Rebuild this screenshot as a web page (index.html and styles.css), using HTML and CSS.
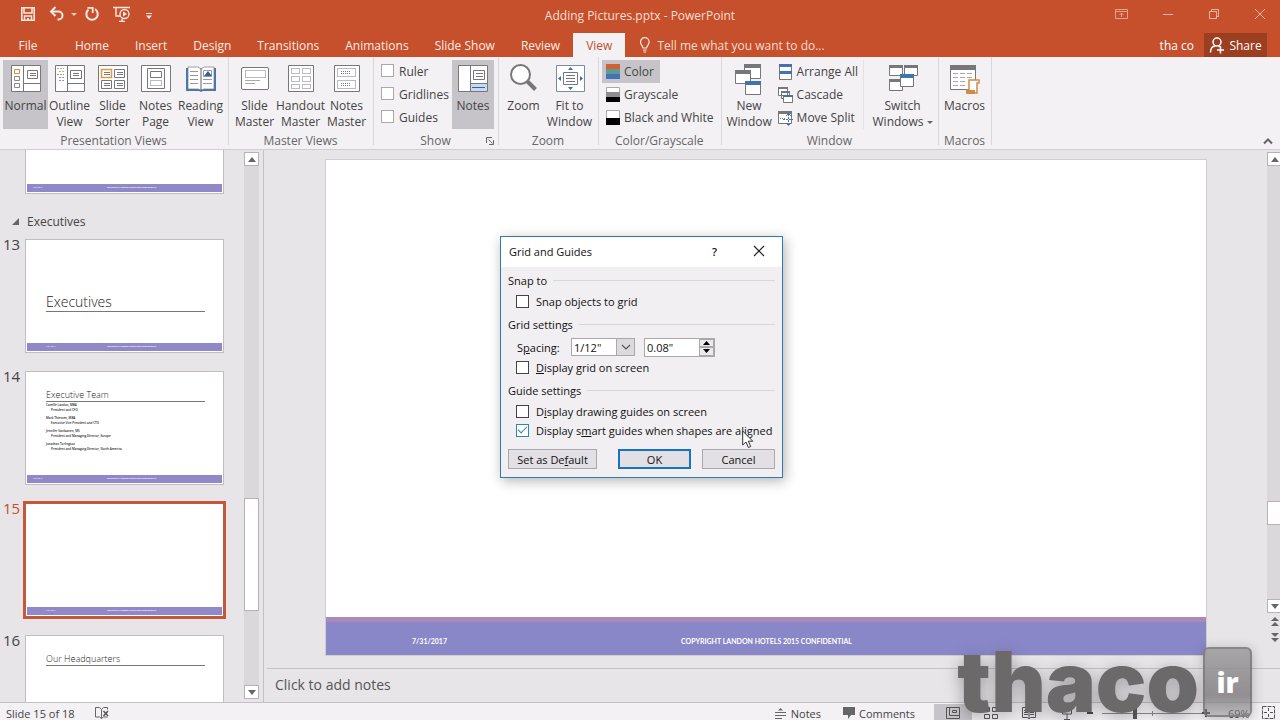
FILE: index.html
```html
<!DOCTYPE html>
<html lang="en">
<head>
<meta charset="utf-8">
<title>Adding Pictures.pptx - PowerPoint</title>
<link rel="stylesheet" href="styles.css">
</head>
<body>
<div class="app">
  <header class="titlebar">
    <div class="quick">
      <button class="bare" aria-label="Save"><svg width="16" height="16"><path d="M1.800 1.800h12.400v12.400H1.800z" fill="none" stroke="#fbe9e2" stroke-width="1.600"/><path d="M4 2v5h8V2M4.500 14v-4h7v4" fill="none" stroke="#fbe9e2" stroke-width="1.500"/><path d="M7 12h2v2H7z" fill="#fbe9e2"/></svg></button>
      <button class="bare" aria-label="Undo"><svg width="16" height="16"><path d="M2 5.500h7.500a4 4 0 0 1 0 8H8.500" fill="none" stroke="#fbe9e2" stroke-width="2"/><path d="M6.500 1L2 5.500 6.500 10" fill="none" stroke="#fbe9e2" stroke-width="2"/></svg></button>
      <button class="bare narrow" aria-label="Undo list"><svg width="6" height="16"><path d="M0 7h6L3 10z" fill="#f3cbbb"/></svg></button>
      <button class="bare repeat" aria-label="Repeat"><svg width="16" height="16"><path d="M11 3.200A5.700 5.700 0 1 1 4.500 3.600" fill="none" stroke="#fbe9e2" stroke-width="2"/><path d="M3.500 1.800h5.200v5.200" fill="none" stroke="#fbe9e2" stroke-width="1.800"/></svg></button>
      <button class="bare" aria-label="Start from beginning"><svg width="18" height="16"><path d="M0 1.500h17M3 2v8h4M6 15.500h6M9 13v2" fill="none" stroke="#fbe9e2" stroke-width="1.400"/><circle cx="11.500" cy="8" r="4.500" fill="#c5502b" stroke="#fbe9e2" stroke-width="1.300"/><path d="M10 5.500v5L14 8z" fill="#fbe9e2"/></svg></button>
      <button class="bare narrow" aria-label="Customize"><svg width="6" height="16"><path d="M0 7h6v1H0zM0 9.500h6L3 13z" fill="#fbe9e2"/></svg></button>
    </div>
    <div class="title">Adding Pictures.pptx - PowerPoint</div>
    <div class="winbtns">
      <button class="bare" aria-label="Ribbon display"><svg width="14" height="14"><path d="M.5 2.500h12v9H.500zM.500 4.500h12M6.500 10V6M4.500 8l2-2 2 2" fill="none" stroke="#e3a28a"/></svg></button>
      <button class="bare" aria-label="Minimize"><svg width="14" height="14"><path d="M2 7.500h10" stroke="#e9b5a2"/></svg></button>
      <button class="bare" aria-label="Restore"><svg width="14" height="14"><path d="M2.500 4.500h7v7h-7zM4.500 4.500v-2h7v7h-2" fill="none" stroke="#e9b5a2"/></svg></button>
      <button class="bare" aria-label="Close"><svg width="14" height="14"><path d="M2 2l10 10M12 2L2 12" stroke="#e9b5a2"/></svg></button>
    </div>
  </header>

  <nav class="tabs">
    <button class="tab file">File</button>
    <button class="tab">Home</button>
    <button class="tab">Insert</button>
    <button class="tab">Design</button>
    <button class="tab">Transitions</button>
    <button class="tab">Animations</button>
    <button class="tab">Slide Show</button>
    <button class="tab">Review</button>
    <button class="tab active">View</button>
    <button class="tell"><svg width="12" height="16"><path d="M4 11c0-2-2.500-3-2.500-6a4.300 4.300 0 0 1 8.600 0c0 3-2.500 4-2.500 6zM4 13h3.600M4.500 15h2.600" fill="none" stroke="#fbe9e2" stroke-width="1.200"/></svg>Tell me what you want to do...</button>
    <span class="user">tha co</span>
    <button class="share"><svg width="16" height="18"><circle cx="8" cy="6" r="4" fill="none" stroke="#fff" stroke-width="1.500"/><path d="M1.500 16.500c0-4 2-6.300 5-6.500M9.500 10l2 1M11.500 10.500v7M8 14h7" fill="none" stroke="#fff" stroke-width="1.500"/></svg>Share</button>
  </nav>

  <section class="ribbon">
    <div class="group">
      <div class="tools">
        <button class="big w45 on"><svg width="32" height="32"><path d="M1.500 2.500h29v26h-29zM13.500 2.500v26M13.500 20.500h17" fill="#fff" stroke="#77767a"/><path d="M17.500 7.500h10v8h-10zM20 10.500h6M20 12.500h6" fill="none" stroke="#77767a"/><path d="M4.500 6.500h5v4h-5z" fill="none" stroke="#d58a3c"/><path d="M4.500 13.500h5v4h-5zM4.500 20.500h5v4h-5z" fill="none" stroke="#88868a"/></svg>Normal</button>
        <button class="big w43"><svg width="32" height="32"><path d="M1.500 2.500h29v26h-29zM13.500 2.500v26M13.500 20.500h17" fill="#fff" stroke="#77767a"/><path d="M16.500 7.500h11v8h-11zM19 10.500h6M19 12.500h6" fill="none" stroke="#77767a"/><path d="M3 5.500h7M5 8.500h5" stroke="#d9a865" stroke-dasharray="2 1"/><path d="M3 11.500h7M5 14.500h5M5 17.500h5" stroke="#999" stroke-dasharray="2 1"/></svg>Outline<br>View</button>
        <button class="big w43"><svg width="32" height="32"><path d="M1.500 2.500h29v26h-29z" fill="#fff" stroke="#77767a"/><path d="M4.500 6.500h10v8h-10z" fill="none" stroke="#d99a45" stroke-width="1.500"/><path d="M17.500 6.500h10v8h-10zM4.500 17.500h10v8h-10zM17.500 17.500h10v8h-10zM7 9.500h6M7 11.500h6M20 9.500h6M20 11.500h6M7 20.500h6M7 22.500h6M20 20.500h6M20 22.500h6" fill="none" stroke="#77767a"/></svg>Slide<br>Sorter</button>
        <button class="big w43"><svg width="32" height="32"><path d="M1.500 2.500h29v26h-29zM7.500 5.500h17v20h-17zM10.500 8.500h11v6h-11z" fill="#fff" stroke="#77767a"/><path d="M10.500 17.500h11v5h-11z" fill="none" stroke="#77767a" stroke-dasharray="1 1"/></svg>Notes<br>Page</button>
        <button class="big w47"><svg width="32" height="32"><path d="M1 5h30v23H18l-2 1-2-1H1z" fill="#4577b0"/><path d="M3 4h10l3 2v21l-3-1H3zM29 4H19l-3 2v21l3-1h10z" fill="#fff" stroke="#77767a" stroke-width=".7"/><path d="M5 8.500h8M5 12.500h8M5 16.500h8M5 20.500h8M18 16.500h9M18 20.500h9" stroke="#999"/><path d="M18.500 7.500h8v6h-8z" fill="#fff" stroke="#999"/><path d="M19 13l4-5 4 5z" fill="#2f5f9c"/></svg>Reading<br>View</button>
      </div>
      <div class="caption">Presentation Views</div>
    </div>
    <div class="group">
      <div class="tools">
        <button class="big w45"><svg width="32" height="32"><rect x="2.500" y="4.500" width="27" height="22" rx="1.500" fill="#fff" stroke="#77767a"/><path d="M6.500 7.500h20v7h-20z" fill="none" stroke="#77767a" stroke-dasharray="1 1"/><path d="M6 17.500h15M6 20.500h10" stroke="#aaa"/></svg>Slide<br>Master</button>
        <button class="big w47"><svg width="32" height="32"><path d="M3.500 2.500h25v26h-25z" fill="#fff" stroke="#77767a"/><path d="M6.500 5.500h8v5h-8zM17.500 5.500h8v5h-8zM6.500 13.500h8v5h-8zM17.500 13.500h8v5h-8zM6.500 21.500h8v4h-8zM17.500 21.500h8v4h-8z" fill="none" stroke="#77767a" stroke-dasharray="1 1"/></svg>Handout<br>Master</button>
        <button class="big w45"><svg width="32" height="32"><path d="M3.500 2.500h25v26h-25z" fill="#fff" stroke="#77767a"/><path d="M6.500 5.500h18v8h-18zM6.500 17.500h18v8h-18zM10 8.500h10M10 10.500h10M10 20.500h10M10 22.500h10" fill="none" stroke="#77767a" stroke-dasharray="1 1"/></svg>Notes<br>Master</button>
      </div>
      <div class="caption">Master Views</div>
    </div>
    <div class="group">
      <div class="tools">
        <div class="checks">
          <label class="tick"><input type="checkbox">Ruler</label>
          <label class="tick"><input type="checkbox">Gridlines</label>
          <label class="tick"><input type="checkbox">Guides</label>
        </div>
        <button class="big w42 on"><svg width="32" height="32"><path d="M1.500 2.500h29v26h-29z" fill="#fff" stroke="#77767a"/><path d="M13 21h17v7H13z" fill="#c9daf0"/><path d="M13.500 2.500v26M13.500 20.500h17M16.500 7.500h11v9h-11zM19 10.500h7M19 13.500h7" fill="none" stroke="#77767a"/><path d="M15 24.500h13" stroke="#2f66a8"/></svg>Notes</button>
      </div>
      <div class="caption">Show<button class="bare launcher" aria-label="Grid settings"><svg width="8" height="8"><path d="M.5 6V.500H6M2.500 2.500l4 4M7.500 3v4.500H3" fill="none" stroke="#666"/></svg></button></div>
    </div>
    <div class="group">
      <div class="tools">
        <button class="big w43"><svg width="32" height="32"><circle cx="12.500" cy="11.500" r="9.500" fill="#fff" stroke="#77767a" stroke-width="2"/><path d="M19.500 18.500l8 8" stroke="#77767a" stroke-width="4"/></svg>Zoom</button>
        <button class="big w49"><svg width="32" height="32"><path d="M2.500 2.500h28v26h-28z" fill="#fff" stroke="#7d8ba0"/><path d="M9.500 9.500h14v12h-14zM12 12.500h9M12 15.500h9M12 18.500h9" fill="none" stroke="#77767a"/><path d="M14 7h5l-2.500-3zM14 24h5l-2.500 3zM7 13v5l-3-2.500zM26 13v5l3-2.500z" fill="#3f6ea5"/></svg>Fit to<br>Window</button>
      </div>
      <div class="caption">Zoom</div>
    </div>
    <div class="group">
      <div class="tools stack">
        <button class="small on"><svg width="14" height="15"><path d="M0 0h14v5H0z" fill="#d35f35"/><path d="M0 5h14v5H0z" fill="#5a9c94"/><path d="M0 10h14v5H0z" fill="#4173b5"/></svg>Color</button>
        <button class="small"><svg width="14" height="15"><path d="M.5.500h13v14H.500z" fill="#fff" stroke="#aaa"/><path d="M0 5h14v5H0z" fill="#8f8d90"/><path d="M0 10h14v5H0z" fill="#000"/></svg>Grayscale</button>
        <button class="small"><svg width="14" height="15"><path d="M.5.500h13v14H.500z" fill="#fff" stroke="#aaa"/><path d="M0 8h14v7H0z" fill="#000"/></svg>Black and White</button>
      </div>
      <div class="caption">Color/Grayscale</div>
    </div>
    <div class="group">
      <div class="tools">
        <button class="big w49"><svg width="32" height="32"><g fill="#fff" stroke="#77767a"><path d="M11.500 2.500h16v13h-16z"/><path d="M2.500 8.500h15v12h-15z"/></g><path d="M11 1h17v4H11zM2 7h16v4H2z" fill="#77767a"/><path d="M12.500 19.500h15v12h-15z" fill="#fff" stroke="#77767a"/><path d="M12 18h16v4H12z" fill="#4173ad"/></svg>New<br>Window</button>
        <div class="stack">
          <button class="small"><svg width="15" height="16"><path d="M1.500.500h12v7h-12zM1.500 8.500h12v7h-12z" fill="#fff" stroke="#77767a"/><path d="M1 0h13v3H1zM1 7h13v3H1z" fill="#4173ad"/></svg>Arrange All</button>
          <button class="small"><svg width="15" height="16"><path d="M.5.500h9v8h-9zM3.500 4.500h8v7h-8z" fill="#fff" stroke="#77767a"/><path d="M5.500 8.500h9v7h-9z" fill="#fff" stroke="#77767a"/><path d="M0 0h10v2H0zM3 4h9v2H3z" fill="#77767a"/><path d="M5 8h10v2H5z" fill="#4173ad"/></svg>Cascade</button>
          <button class="small"><svg width="15" height="16"><path d="M.5 1.500h13v12H.500z" fill="#fff" stroke="#77767a"/><path d="M0 1h14v3H0z" fill="#77767a"/><path d="M2 8.500h5" stroke="#77767a" stroke-dasharray="1 1"/><path d="M10.500 4v11M5 9.500h10" stroke="#4173ad" stroke-dasharray="2 1"/><path d="M8 6l2.500-2.500L13 6M8 13l2.500 2.500L13 13" fill="none" stroke="#4173ad"/></svg>Move Split</button>
        </div>
        <button class="big switch"><svg width="32" height="32"><path d="M2.500 2.500h13v10h-13zM17.500 2.500h13v10h-13zM2.500 16.500h13v11h-13z" fill="#fff" stroke="#77767a"/><path d="M2 2h14v3H2zM17 2h14v3H17zM2 16h14v3H2z" fill="#77767a"/><path d="M13.500 12.500h13v11h-13z" fill="#fff" stroke="#77767a"/><path d="M13 11h14v4H13z" fill="#4173ad"/></svg><span>Switch<br>Windows<i class="caret"></i></span></button>
      </div>
      <div class="caption">Window</div>
    </div>
    <div class="group">
      <div class="tools">
        <button class="big w45"><svg width="32" height="32"><path d="M1.500 2.500h25v24h-25z" fill="#fff" stroke="#77767a"/><path d="M1 2h26v5H1z" fill="#77767a"/><path d="M4 10.500h20M4 14.500h20M4 18.500h14M4 22.500h12" stroke="#aaa" stroke-dasharray="5 2"/><path d="M20 17h10v3h-2v10H18v-3h2z" fill="#fff" stroke="#d48a42" stroke-width="1.500"/><path d="M17 27h9v4h-7a2 2 0 0 1-2-2z" fill="#d48a42"/></svg>Macros</button>
      </div>
      <div class="caption">Macros</div>
    </div>
    <button class="bare collapse" aria-label="Collapse ribbon"><svg width="10" height="8"><path d="M1 6.500l4-4 4 4" fill="none" stroke="#666" stroke-width="2"/></svg></button>
  </section>

  <main class="work">
    <aside class="panel">
      <div class="thumbs">
        <div class="entry cut"><span class="num"></span><div class="thumb"><div class="strip"><i>7/31/2017</i><b>COPYRIGHT LANDON HOTELS 2015 CONFIDENTIAL</b></div></div></div>
        <div class="section"><svg width="7" height="7"><path d="M7 0v7H0z" fill="#666"/></svg>Executives</div>
        <div class="entry"><span class="num">13</span><div class="thumb"><h3 class="cover">Executives</h3><div class="strip far"><i>7/31/2017</i><b>COPYRIGHT LANDON HOTELS 2015 CONFIDENTIAL</b></div></div></div>
        <div class="entry"><span class="num">14</span><div class="thumb"><h3 class="heading">Executive Team</h3>
          <dl class="team">
            <dt>Camille Landon, MBA</dt><dd>President and CFO</dd>
            <dt>Mark Thiessen, MBA</dt><dd>Executive Vice President and CTO</dd>
            <dt>Jennifer Vanlaanen, MS</dt><dd>President and Managing Director, Europe</dd>
            <dt>Jonathan Torlington</dt><dd>President and Managing Director, North America</dd>
          </dl>
          <div class="strip"><i>7/31/2017</i><b>COPYRIGHT LANDON HOTELS 2015 CONFIDENTIAL</b></div></div></div>
        <div class="entry current"><span class="num">15</span><div class="thumb"><div class="strip far"><i>7/31/2017</i><b>COPYRIGHT LANDON HOTELS 2015 CONFIDENTIAL</b></div></div></div>
        <div class="entry"><span class="num">16</span><div class="thumb"><h3 class="heading">Our Headquarters</h3></div></div>
      </div>
      <div class="scroll">
        <button class="arrow" aria-label="Scroll up"><svg width="8" height="5"><path d="M0 5h8L4 0z" fill="#666"/></svg></button>
        <div class="track"><div class="grip"></div></div>
        <button class="arrow" aria-label="Scroll down"><svg width="8" height="5"><path d="M0 0h8L4 5z" fill="#666"/></svg></button>
      </div>
    </aside>
    <section class="editor">
      <div class="stage">
        <article class="slide">
          <footer class="slidefoot"><span>7/31/2017</span><span>COPYRIGHT LANDON HOTELS 2015 CONFIDENTIAL</span><span></span></footer>
        </article>
        <div class="vscroll">
          <button class="arrow" aria-label="Scroll up"><svg width="8" height="5"><path d="M0 5h8L4 0z" fill="#666"/></svg></button>
          <div class="track"><div class="grip"></div></div>
          <button class="arrow" aria-label="Scroll down"><svg width="8" height="5"><path d="M0 0h8L4 5z" fill="#666"/></svg></button>
          <button class="bare jump" aria-label="Previous slide"><svg width="8" height="9"><path d="M0 4h8L4 0zM0 9h8L4 5z" fill="#666"/></svg></button>
          <button class="bare jump" aria-label="Next slide"><svg width="8" height="9"><path d="M0 0h8L4 4zM0 5h8L4 9z" fill="#666"/></svg></button>
        </div>
      </div>
      <div class="notes">Click to add notes</div>
    </section>
  </main>

  <footer class="status">
    <span class="count">Slide 15 of 18</span>
    <button class="bare" aria-label="Spelling"><svg width="16" height="14"><path d="M1.500 1.500h4l2 2v9l-2-1.500h-4zM7.500 3.500l2-2h4v2M7.500 12.500l2-1.500h4" fill="none" stroke="#666"/><path d="M9.500 5l4.500 5M14 5l-4.500 5" stroke="#555" stroke-width="1.500"/></svg></button>
    <button class="bare word notesbtn"><svg width="12" height="14"><path d="M0 6.500h11M0 9.500h11M0 12.500h7" stroke="#666"/><path d="M3 4.500h5L5.500 2z" fill="#666"/></svg>Notes</button>
    <button class="bare word comments"><svg width="13" height="14"><path d="M1 1h12v8H9l-3 4V9H1z" fill="#666"/></svg>Comments</button>
    <button class="bare view on" aria-label="Normal"><svg width="14" height="14"><path d="M.5 1.500h13v11H.500zM3.500 1.500v8h10M6.500 4.500h4v2h-4z" fill="none" stroke="#555"/></svg></button>
    <button class="bare view" aria-label="Slide sorter"><svg width="14" height="14"><path d="M.5 1.500h5v4h-5zM8.500 1.500h5v4h-5zM.500 8.500h5v4h-5zM8.500 8.500h5v4h-5z" fill="none" stroke="#555"/></svg></button>
    <button class="bare view" aria-label="Reading view"><svg width="14" height="14"><path d="M.5 1.500h5l1.500 1 1.500-1h5v10h-5L7 13l-1.500-1.500h-5zM7 2v10M2 4.500h4M2 6.500h4M2 8.500h4M8 4.500h4M8 6.500h4M8 8.500h4" fill="none" stroke="#555"/></svg></button>
    <button class="bare view" aria-label="Slide show"><svg width="14" height="14"><path d="M1 1.500h12M2.500 2v6h9V2M7 8v5M4 13.500h6" fill="none" stroke="#555"/></svg></button>
    <button class="bare step" aria-label="Zoom out"><svg width="8" height="8"><path d="M1 4h6" stroke="#444" stroke-width="2"/></svg></button>
    <input class="zoom" type="range" min="10" max="190" value="69" aria-label="Zoom level">
    <button class="bare step" aria-label="Zoom in"><svg width="8" height="8"><path d="M0 4h8M4 0v8" stroke="#444" stroke-width="2"/></svg></button>
    <span class="pct">69%</span>
    <button class="bare" aria-label="Fit"><svg width="14" height="14"><path d="M.5.500h12v12H.500zM6.500 2v3M6.500 8v3M2 6.500h3M8 6.500h3" fill="none" stroke="#555" stroke-dasharray="4 1"/></svg></button>
  </footer>

  <form class="dialog" role="dialog" aria-labelledby="dlg">
    <div class="dlgbar"><span id="dlg">Grid and Guides</span><button type="button" class="bare help">?</button><button type="button" class="bare" aria-label="Close"><svg width="12" height="12"><path d="M1 1l10 10M11 1L1 11" stroke="#222" stroke-width="1.200"/></svg></button></div>
    <div class="dlgbody">
      <div class="legend">Snap to</div>
      <label class="opt"><input type="checkbox"><span>Snap objects to <u>g</u>rid</span></label>
      <div class="legend">Grid settings</div>
      <div class="spacing">
        <label for="sp">S<u>p</u>acing:</label>
        <span class="combo"><select id="sp"><option>1/12"</option></select><span class="drop"><svg width="10" height="7"><path d="M1 1l4 4 4-4" fill="none" stroke="#555" stroke-width="1.200"/></svg></span></span>
        <span class="spin"><input type="text" value='0.08"' aria-label="Spacing value"><span class="updown"><button type="button" aria-label="Increase"><svg width="7" height="4"><path d="M0 4h7L3.500 0z"/></svg></button><button type="button" aria-label="Decrease"><svg width="7" height="4"><path d="M0 0h7L3.500 4z"/></svg></button></span></span>
      </div>
      <label class="opt tight"><input type="checkbox"><span><u>D</u>isplay grid on screen</span></label>
      <div class="legend">Guide settings</div>
      <label class="opt"><input type="checkbox"><span>D<u>i</u>splay drawing guides on screen</span></label>
      <label class="opt tight"><input type="checkbox" checked><span>Display s<u>m</u>art guides when shapes are aligned</span></label>
      <div class="actions"><button type="button" class="act default">Set as De<u>f</u>ault</button><button type="button" class="act ok">OK</button><button type="button" class="act">Cancel</button></div>
    </div>
  </form>
  <svg class="cursor" width="12" height="19"><path d="M.7 1v14l3.300-3 2.400 5.500 2.300-1-2.400-5.300h4.500z" fill="#fff" stroke="#333"/></svg>
  <div class="brand"><span class="brandname">thaco</span><span class="key">ir</span></div>
</div>
</body>
</html>
```
FILE: styles.css
```css
* { box-sizing: border-box; }
html, body { margin: 0; height: 100%; }
body, button, input, select { font-family: "Open Sans", "Noto Sans", sans-serif; font-size: 12px; }
button { border: 0; padding: 0; background: none; color: inherit; }
svg { display: block; flex: none; }

.app { position: relative; display: flex; flex-direction: column; height: 100vh; overflow: hidden; background: #e7e5e8; color: #444; }
.bare { display: flex; align-items: center; justify-content: center; }

.titlebar { display: grid; grid-template-columns: 1fr auto 1fr; align-items: center; height: 32px; flex: none; background: #c5502b; color: #f9dfd5; padding-bottom: 4px; }
.quick { display: flex; padding-left: 20px; gap: 13px; }
.narrow { margin-left: -7px; }
.repeat { margin-left: -6px; }
.quick .narrow:last-child { margin-left: 2px; }
.title { line-height: 16px; padding-top: 4px; }
.winbtns { display: flex; justify-content: flex-end; gap: 32px; padding-right: 13px; }

.tabs { display: flex; height: 25px; flex: none; background: #c5502b; color: #fdece5; align-items: stretch; padding-top: 1px; }
.tab { padding: 0 13px; }
.tab.file { width: 56px; margin-right: 6px; }
.tab.active { background: #f3f1f4; color: #c0502d; }
.tell { display: flex; align-items: center; gap: 6px; padding-left: 14px; color: #f9dcd1; }
.user { margin-left: auto; align-self: center; color: #fff; padding-right: 10px; }
.share { display: flex; align-items: center; justify-content: center; gap: 4px; width: 63px; margin-right: 13px; background: #9c3e20; color: #fff; }

.ribbon { display: flex; flex: none; height: 93px; background: #f3f1f4; border-bottom: 1px solid #d0ced2; position: relative; }
.group { display: flex; flex-direction: column; position: relative; padding: 3px 4px 0 3px; border-right: 1px solid #d9d7db; margin-bottom: 4px; }
.tools { display: flex; flex: none; height: 69px; }
.caption { flex: none; text-align: center; color: #666; line-height: 16px; margin-top: 4px; }
.launcher { position: absolute; right: 4px; bottom: 0; }
.big { display: flex; flex-direction: column; align-items: center; padding-top: 3px; line-height: 16px; white-space: nowrap; text-align: center; }
.big svg { margin-bottom: 3px; }
.big, .small { color: #444; }
.on { background: #c6c4c8; }
.w42 { width: 42px; }
.w43 { width: 43px; }
.w45 { width: 45px; }
.w47 { width: 47px; }
.w49 { width: 49px; }
.checks { display: flex; flex-direction: column; width: 75px; padding-left: 4px; }
.tick { display: flex; align-items: center; gap: 5px; height: 23px; }
.tick input { appearance: none; margin: 0 0 2px; width: 13px; height: 13px; background: #fff; border: 1px solid #aaa8ac; flex: none; }
.stack { display: flex; flex-direction: column; align-items: flex-start; }
.small { display: flex; align-items: center; gap: 4px; height: 23px; padding: 0 3px 0 4px; white-space: nowrap; }
.small.on { padding-right: 6px; }
.switch { width: 71px; padding-left: 7px; margin-left: 2px; border-left: 1px solid #e3e1e5; }
.caret { display: inline-block; margin-left: 3px; border: 3px solid transparent; border-top-color: #666; border-bottom: 0; vertical-align: middle; }
.collapse { position: absolute; right: 7px; bottom: 4px; }

.work { display: flex; flex: 1; min-height: 0; }
.panel { display: flex; width: 264px; flex: none; border-right: 1px solid #c3c1c5; padding-right: 4px; }
.thumbs { flex: 1; min-width: 0; overflow: hidden; }
.entry { display: flex; margin-bottom: 18px; }
.num { width: 25px; padding-left: 3px; font-size: 15px; line-height: 10px; flex: none; }
.thumb { display: flex; flex-direction: column; width: 199px; height: 114px; background: #fff; border: 1px solid #c0bec2; padding: 1px; }
.cut { margin-bottom: 0; }
.cut .thumb { height: 44px; border-top: 0; }
.section { display: flex; align-items: center; gap: 8px; height: 45px; padding: 10px 0 0 12px; }
.strip { display: grid; grid-template-columns: 74px 1fr; align-items: center; height: 8px; margin-top: auto; background: #8f88c9; color: #fff; font-size: 2px; line-height: 4px; white-space: nowrap; padding-left: 6px; }
.strip i { font-style: normal; }
.strip.far { padding-left: 19px; grid-template-columns: 61px 1fr; }
.cover, .heading { margin: 0 17px 0 19px; color: #222; font-weight: 300; border-bottom: 1px solid #77767a; }
.cover { margin-top: 52px; font-size: 14px; line-height: 18px; }
.heading { margin-top: 15px; font-size: 9px; line-height: 13px; }
.team { margin: 1px 0 0 19px; font-size: 3px; font-weight: 600; line-height: 5px; color: #222; }
.team dd { display: list-item; list-style: none; margin: 0 0 3px 5px; }
.current { color: #c5502b; }
.current .thumb { outline: 3px solid #c5583a; border-color: #fff; outline-offset: -1px; }

.scroll { display: flex; flex-direction: column; width: 15px; padding: 2px 0 3px; flex: none; }
.arrow { display: flex; align-items: center; justify-content: center; height: 14px; background: #fff; border: 1px solid #b5b3b7; }
.track { flex: 1; background: #dad8db; display: flex; flex-direction: column; }
.grip { background: #fff; border: 1px solid #b5b3b7; }
.scroll .grip { margin-top: 332px; height: 113px; }

.editor { flex: 1; display: flex; flex-direction: column; min-width: 0; }
.stage { flex: 1; display: flex; padding-left: 61px; min-height: 0; }
.slide { flex: 1; display: flex; flex-direction: column; margin: 9px 60px 12px 0; background: #fff; border: 1px solid #cfcdd1; }
.slidefoot { display: grid; grid-template-columns: 1fr 2fr 1fr; align-items: center; margin: auto 0 0; height: 38px; background: #8a87c8; border-top: 5px solid #ab8abb; color: #fff; font: 700 7px/12px Lato, sans-serif; padding: 5px 0 0 1px; }
.slidefoot span:first-child { padding-left: 85px; }
.slidefoot span:nth-child(2) { text-align: center; }
.vscroll { width: 13px; overflow: hidden; display: flex; flex-direction: column; padding: 2px 0 23px; }
.vscroll > * { width: 15px; flex-shrink: 0; }
.vscroll .grip { margin-top: 335px; height: 24px; }
.jump { height: 16px; }
.notes { height: 34px; flex: none; border-top: 1px solid #c3c1c5; margin-left: 3px; padding: 5px 8px; font-size: 14px; line-height: 22px; color: #555; }

.status { display: flex; align-items: center; flex: none; height: 18px; background: #f3f1f4; border-top: 1px solid #c3c1c5; padding: 3px 4px 0 6px; white-space: nowrap; font-size: 11px; }
.status button { font-size: 11px; }
.count { width: 88px; }
.word { gap: 4px; }
.notesbtn { margin-left: auto; }
.comments { margin: 0 19px 0 21px; }
.view { width: 38px; height: 18px; }
.step { width: 16px; justify-content: flex-start; }
.zoom { appearance: none; width: 100px; height: 12px; margin: 0; background: linear-gradient(#888, #888) center / 100% 1px no-repeat, linear-gradient(#888, #888) center / 1px 5px no-repeat; }
.zoom::-webkit-slider-thumb { appearance: none; width: 4px; height: 11px; background: #555; }
.pct { width: 44px; padding-left: 10px; }

.dialog { position: absolute; left: 500px; top: 236px; width: 283px; border: 1px solid #2f79b5; background: #f1eff2; color: #111; box-shadow: 2px 3px 12px rgba(0, 0, 0, .3); font-size: 11px; }
.dialog button, .dialog input, .dialog select { font-size: 11px; color: #111; }
.dlgbar { display: flex; align-items: center; height: 30px; background: #fff; padding: 0 17px 2px 8px; }
.help { margin: 0 36px 0 auto; font-weight: 600; }
.dlgbody { padding: 4px 7px 8px; }
.legend { display: flex; align-items: center; gap: 6px; height: 18px; margin-top: 5px; white-space: nowrap; }
.legend:first-child { margin-top: 0; }
.legend::after { content: ""; flex: 1; height: 1px; background: #d8d6da; }
.opt { display: flex; align-items: center; gap: 7px; height: 18px; margin: 3px 0 0 8px; white-space: nowrap; }
.opt.tight { margin-top: 1px; }
.opt input { appearance: none; margin: 0; width: 13px; height: 13px; background: #fff; border: 1px solid #444; flex: none; display: grid; place-items: center; }
.opt input:checked { border-color: #2d87a8; }
.opt input:checked::after { content: ""; width: 8px; height: 4px; border: solid #2d87a8; border-width: 0 0 1px 1px; rotate: -45deg; margin-bottom: 3px; }
.spacing { display: flex; align-items: center; height: 20px; margin: 4px 0 0 9px; }
.spacing label { width: 54px; }
.combo { display: flex; position: relative; width: 64px; height: 18px; margin-right: 9px; }
.combo select { appearance: none; width: 100%; border: 1px solid #aaa8ac; background: #fff; padding: 0 2px; border-radius: 0; }
.drop { position: absolute; right: 0; top: 0; width: 19px; height: 18px; display: grid; place-items: center; background: #dcdadd; border: 1px solid #aaa8ac; pointer-events: none; }
.spin { display: flex; width: 71px; height: 19px; border: 1px solid #aaa8ac; background: #fff; }
.spin input { width: 54px; border: 0; padding: 0 2px; background: none; }
.updown { display: flex; flex-direction: column; flex: 1; }
.updown button { flex: 1; display: grid; place-items: center; background: #eceaed; border: 1px solid #aaa8ac; }
.actions { display: flex; justify-content: space-between; margin-top: 10px; }
.act { height: 20px; width: 73px; background: #e2e0e4; border: 1px solid #aaa8ac; }
.default { width: 89px; margin-right: 10px; }
.act.ok { border: 2px solid #1473c4; }
.cursor { position: absolute; left: 742px; top: 430px; }

.brand { position: absolute; right: 28px; bottom: 3px; display: flex; align-items: flex-end; gap: 4px; pointer-events: none; }
.brandname { font: 900 84px/70px Inter, "Liberation Sans", sans-serif; color: #6c696a; text-shadow: 0 4px 16px rgba(60, 50, 55, .4); }
.key { display: grid; place-items: center; width: 49px; height: 70px; border: 2px solid rgba(120, 117, 119, .7); border-radius: 6px; background: linear-gradient(rgba(160, 157, 160, .9), rgba(130, 127, 130, .85) 70%, rgba(130, 127, 130, .5)); color: #fff; font-size: 28px; font-weight: 800; box-shadow: 0 2px 12px rgba(60, 50, 55, .3); }
```
